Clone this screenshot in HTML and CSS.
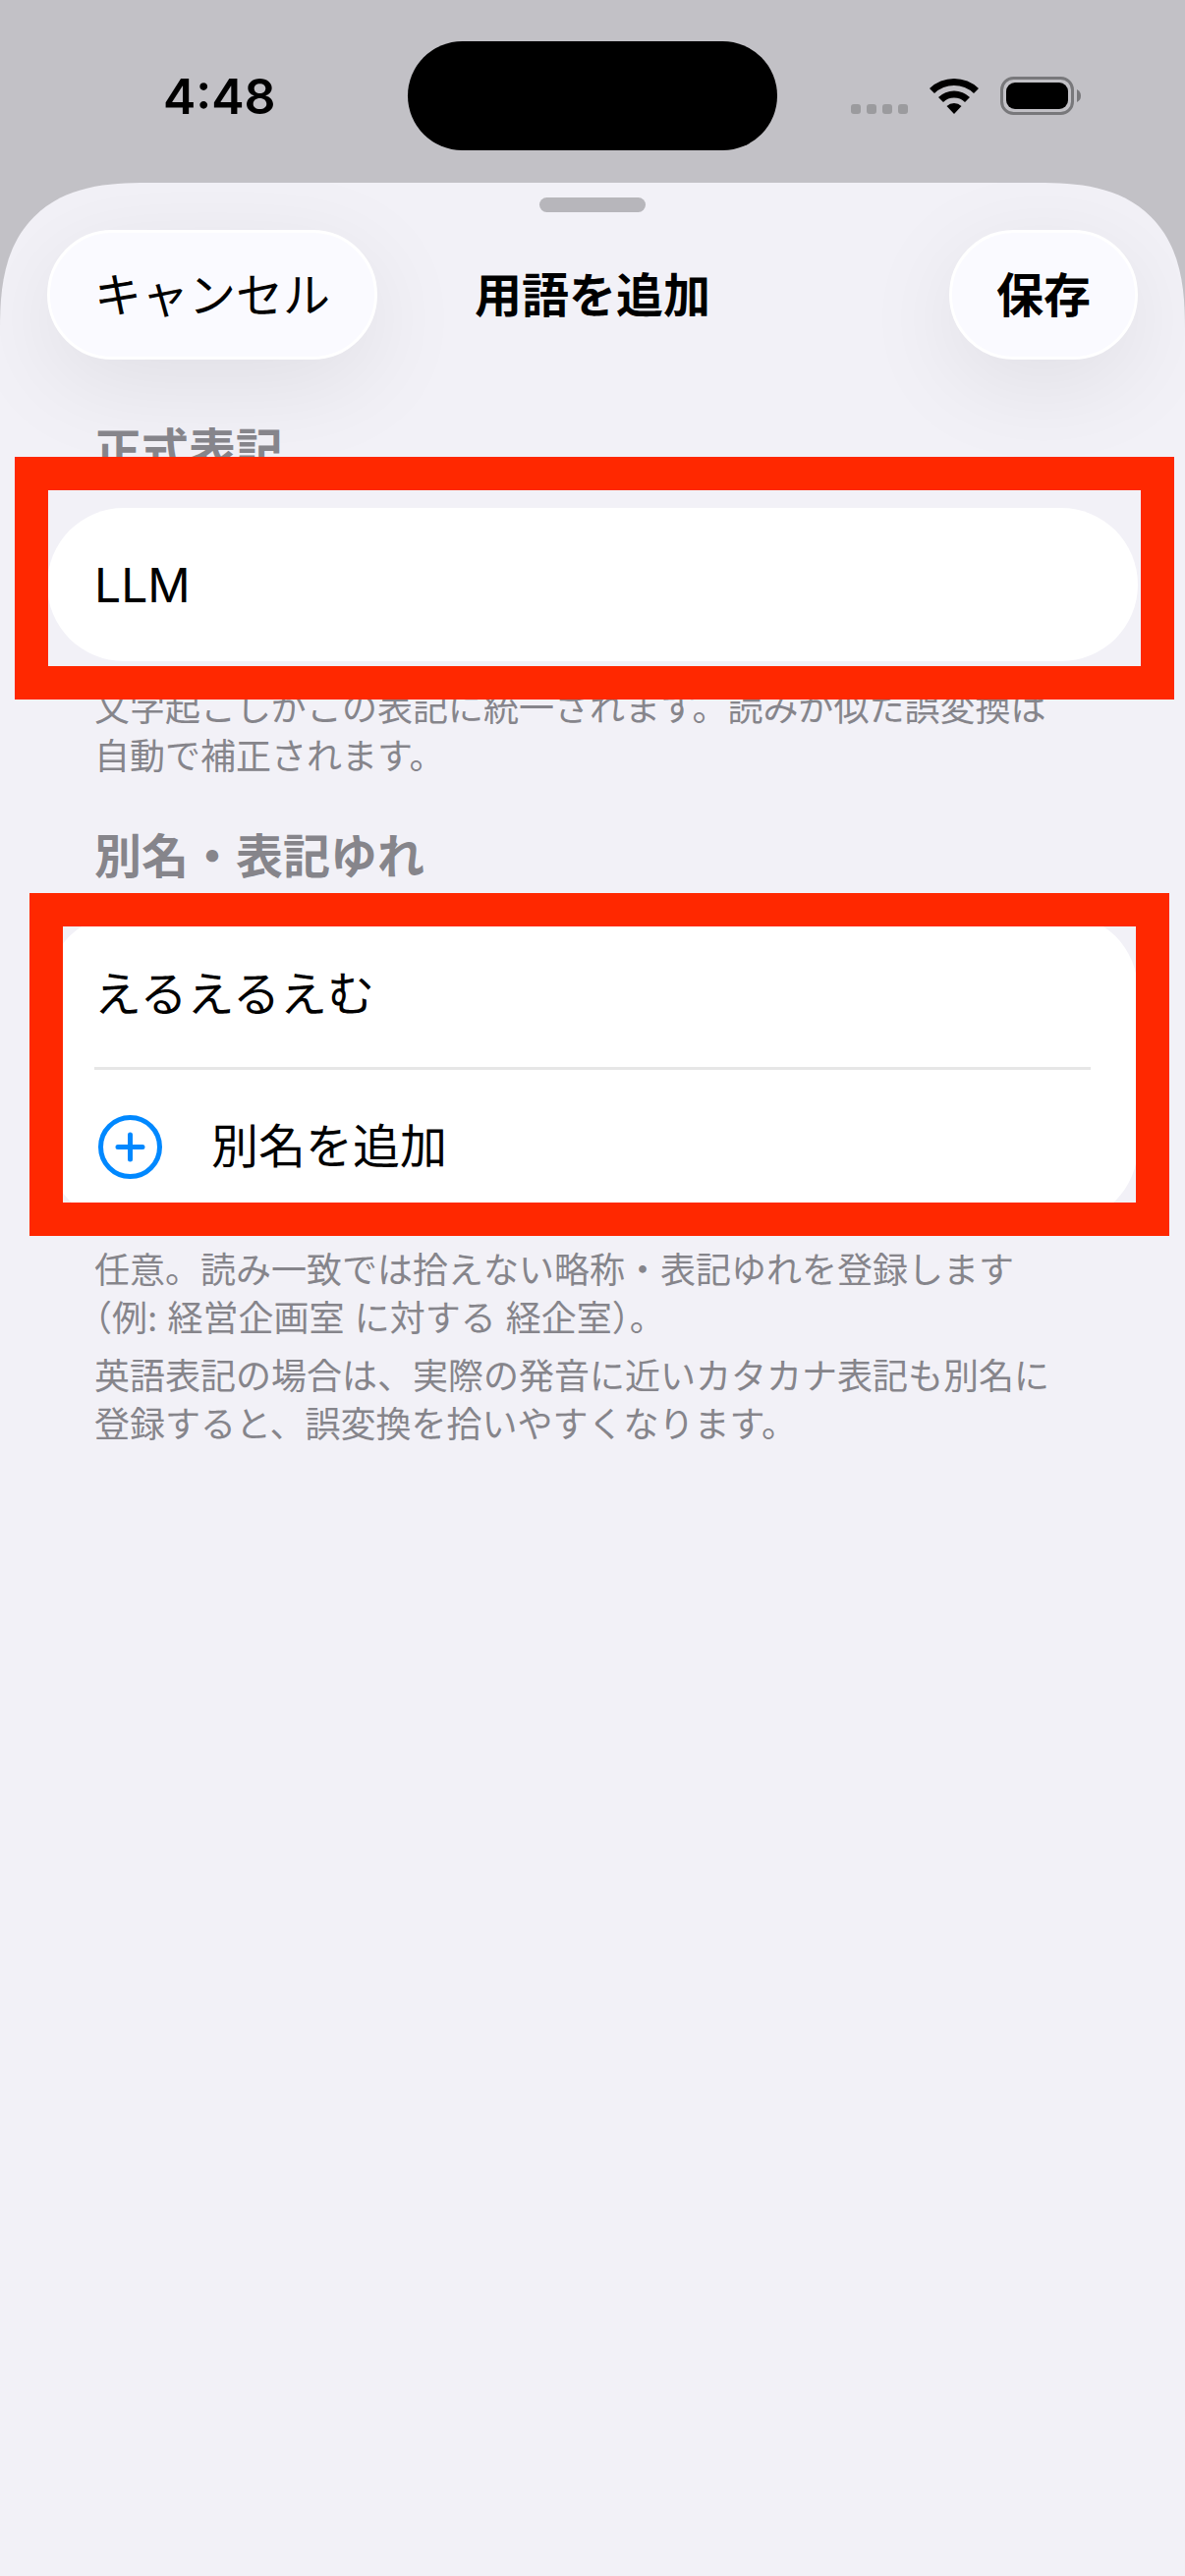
FILE: index.html
```html
<!DOCTYPE HTML>
<html lang="ja">
<head>
<meta charset="utf-8">
<meta name="viewport" content="width=device-width">
<title>用語を追加</title>
<link rel="stylesheet" href="styles.css">
</head>

<body>
	<div class="status">
		<span class="time">4:48</span>
		<span class="island"></span>
		<div class="icons">
			<svg class="signal" viewBox="0 0 58 10"><rect width="10" height="10" rx="3"/><rect x="16" width="10" height="10" rx="3"/><rect x="32" width="10" height="10" rx="3"/><rect x="48" width="10" height="10" rx="3"/></svg>
			<svg class="wifi" viewBox="0 0 50 37">
				<path d="M0 11 A36 36 0 0 1 50 11 L45 16 A29 29 0 0 0 5 16 Z"/>
				<path d="M9 20 A23 23 0 0 1 41 20 L36 25 A16 16 0 0 0 14 25 Z"/>
				<path d="M17.500 29 A11 11 0 0 1 32.500 29 L25 37 Z"/>
			</svg>
			<svg class="battery" viewBox="0 0 82 39">
				<rect class="shell" x="1.500" y="1.500" width="72" height="36" rx="12"/>
				<rect x="6" y="6" width="63" height="27" rx="9"/>
				<path class="cap" d="M78 13 Q82 15 82 19.500 Q82 24 78 26 Z"/>
			</svg>
		</div>
	</div>

	<form class="sheet">
		<div class="grabber"></div>
		<header class="bar">
			<button type="button" class="pill">キャンセル</button>
			<h1>用語を追加</h1>
			<button type="submit" class="pill save">保存</button>
		</header>

		<section>
			<h2><label for="term">正式表記</label></h2>
			<div class="card">
				<input type="text" id="term" class="row" value="LLM">
				<div class="mark mark1"></div>
			</div>
			<div class="note">
				<p>文字起こしがこの表記に統一されます。読みが似た誤変換は自動で補正されます。</p>
			</div>
		</section>

		<section>
			<h2><label for="alias">別名・表記ゆれ</label></h2>
			<div class="card">
				<input type="text" id="alias" class="row" value="えるえるえむ">
				<hr>
				<button type="button" class="row add">
					<svg class="plus" viewBox="0 0 65 65"><circle cx="32.500" cy="32.500" r="30"/><path d="M32.500 20V45M20 32.500H45"/></svg>
					別名を追加
				</button>
				<div class="mark mark2"></div>
			</div>
			<div class="note">
				<p>任意。読み一致では拾えない略称・表記ゆれを登録します<br><span class="half">（</span>例: 経営企画室 に対する 経企室<span class="half">）</span>。</p>
				<p>英語表記の場合は、実際の発音に近いカタカナ表記も別名に登録すると、誤変換を拾いやすくなります。</p>
			</div>
		</section>
	</form>
</body>
</html>
```

FILE: styles.css
```css
* {margin:0; padding:0; box-sizing:border-box;}
body {min-height:100vh; display:flex; flex-direction:column; background:#c2c1c6; color:#000; font-family:Inter,"Noto Sans CJK JP",sans-serif; font-size:48px; line-height:60px;}
button,input {font:inherit; color:inherit; border:0; background:none;}

/* status bar */
.status {height:186px; padding:42px 106px 0; display:grid; grid-template-columns:1fr 376px 1fr; align-items:start;}
.island {height:111px; border-radius:56px; background:#000;}
.time,.icons {height:111px; display:flex; align-items:center;}
.time {padding-left:60px; font-size:50px; font-weight:600;}
.icons {justify-content:flex-end; gap:22px;}
.signal {width:58px; height:10px; fill:#9b9b9e; margin-top:26px;}
.wifi {width:50px; height:37px;}
.battery {width:82px; height:39px;}
.shell {fill:none; stroke:#78787b; stroke-width:3;}
.cap {fill:#78787b;}

/* sheet */
.sheet {flex:1; padding:15px 48px 48px; background:#f2f1f7; border-radius:150px 150px 0 0; corner-shape:superellipse(1.4); overflow:hidden;}
.grabber {width:108px; height:15px; margin:0 auto 18px; border-radius:8px; background:#b7b6bb;}
.bar {display:grid; grid-template-columns:1fr auto 1fr; align-items:center;}
.bar h1 {padding-top:2px; font-size:48px; font-weight:600;}
.pill {justify-self:start; height:132px; padding:2px 45px 0; border:3px solid #fff; border-radius:66px; background:#fafaff; box-shadow:0 24px 100px rgba(0,0,0,0.08);}
.save {justify-self:end; font-weight:600;}

section {padding-top:41px;}
.bar+section {padding-top:57px;}
section h2 {padding:0 48px; font-size:48px; line-height:72px; font-weight:600; color:#86858b;}
.card {position:relative; margin-top:22px; border-radius:78px; background:#fff;}
.row {display:flex; align-items:center; width:100%; height:156px; padding:0 48px; outline:none;}
.card hr {height:3px; margin:0 48px; border:0; background:#e6e6e6;}
.add {gap:50px; padding-left:52px;}
.plus {width:65px; height:65px; fill:none; stroke:#08f; stroke-width:5; stroke-linecap:round;}
.note {padding:24px 72px 0 48px; font-size:36px; line-height:49px; color:#86858b;}
.note p+p {margin-top:10px;}
/* 括弧は半角幅で組む */
.half {font-family:"Noto Sans CJK JP",sans-serif; font-feature-settings:"halt"; line-height:1;}

/* red frames laid over the cards */
.mark {position:absolute; border:34px solid #ff2800; pointer-events:none;}
.mark1 {inset:-52px -37px -39px -33px;}
.mark2 {inset:-21px -32px -13px -18px;}
```
